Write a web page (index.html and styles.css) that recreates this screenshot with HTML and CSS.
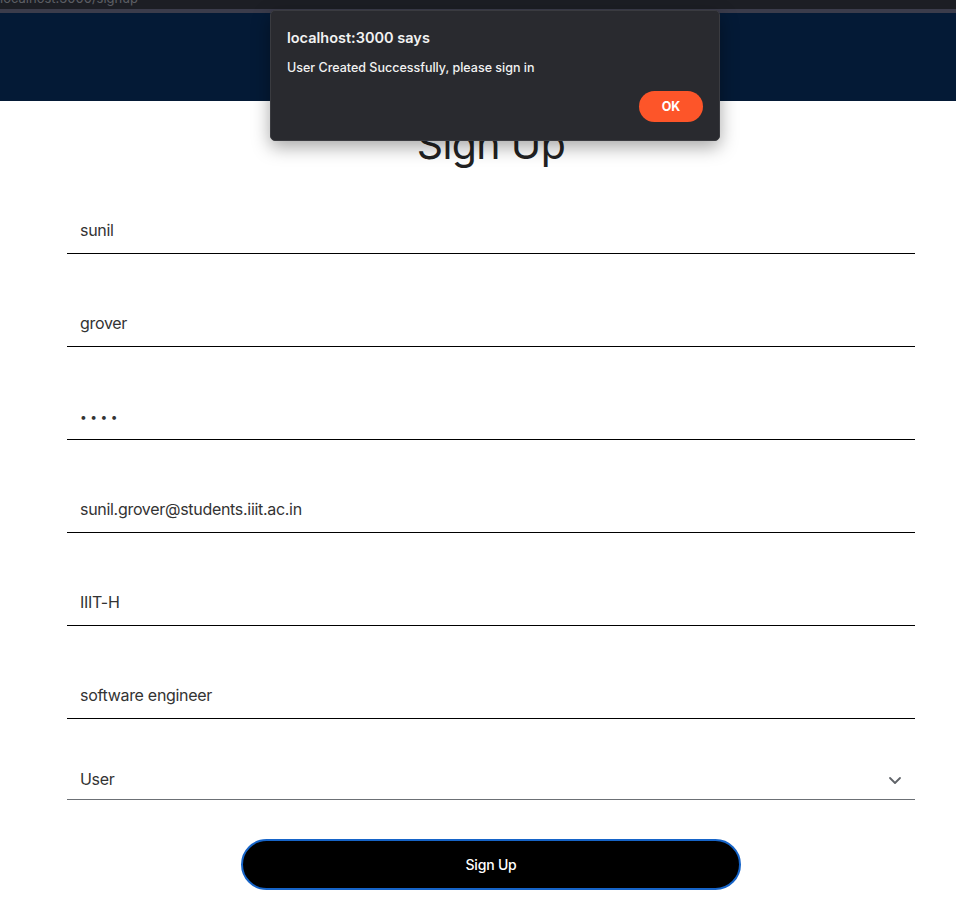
FILE: index.html
```html
<!DOCTYPE html>
<html lang="en">
<head>
<meta charset="utf-8">
<title>Sign Up</title>
<link rel="stylesheet" href="styles.css">
</head>
<body>
<div class="topstrip"><span class="url">localhost:3000/signup</span></div>
<div class="topline"></div>
<header class="navbar"></header>
<main class="page">
  <h1 class="title">Sign Up</h1>
  <form class="form">
    <div class="field"><input class="input" type="text" value="sunil"></div>
    <div class="field"><input class="input" type="text" value="grover"></div>
    <div class="field"><input class="input pw" type="password" value="1234"></div>
    <div class="field"><input class="input" type="text" value="sunil.grover@students.iiit.ac.in"></div>
    <div class="field"><input class="input" type="text" value="IIIT-H"></div>
    <div class="field"><input class="input" type="text" value="software engineer"></div>
    <div class="select-wrap">
      <span class="select-text">User</span>
      <svg class="chevron" width="14" height="10" viewBox="0 0 14 10"><path d="M2 3l5 5 5-5" fill="none" stroke="#5f6368" stroke-width="1.8" stroke-linecap="round" stroke-linejoin="round"/></svg>
    </div>
    <div class="btn-row"><button type="button" class="btn">Sign Up</button></div>
  </form>
</main>
<div class="dialog">
  <div class="dlg-title">localhost:3000 says</div>
  <div class="dlg-msg">User Created Successfully, please sign in</div>
  <div class="dlg-actions"><button type="button" class="ok">OK</button></div>
</div>
</body>
</html>
```
FILE: styles.css
```css
* { box-sizing: border-box; }
html, body { margin: 0; padding: 0; background: #fff; }
body { font-family: Inter, "Noto Sans", sans-serif; color: #222; }

.topstrip {
  height: 9px;
  background: #1c1e24;
  overflow: hidden;
  position: relative;
}
.url {
  display: block;
  margin-top: -10px;
  font-size: 13px;
  line-height: 16px;
  color: #5c5e64;
}
.topline { height: 4px; background: #3b3c4b; }
.navbar { height: 88px; background: #041a36; }

.page { padding: 0 41px 0 67px; }
.title {
  margin: 19px 0 0;
  text-align: center;
  font-size: 41px;
  line-height: 48px;
  font-weight: 400;
  color: #222;
  letter-spacing: -0.6px;
}
.form { display: flex; flex-direction: column; margin-top: 39px; }
.field { margin-bottom: 46px; }
.input {
  display: block;
  width: 100%;
  height: 47px;
  border: 0;
  border-bottom: 1px solid #000;
  padding: 0 13px;
  font-family: Inter, sans-serif;
  font-size: 16px;
  letter-spacing: -0.3px;
  color: #333;
  background: transparent;
  outline: none;
}
.input.pw { letter-spacing: 3.5px; font-size: 12px; }
.select-wrap {
  margin-top: -5px;
  height: 40px;
  border-bottom: 1px solid #6c7075;
  display: flex;
  align-items: center;
  justify-content: space-between;
  padding: 0 13px;
}
.select-text { font-size: 16px; color: #333; letter-spacing: -0.3px; padding-bottom: 1px; }
.chevron { display: block; }
.btn-row { display: flex; justify-content: center; margin-top: 39px; }
.btn {
  width: 500px;
  height: 51px;
  background: #000;
  color: #fff;
  border: 2px solid #1664c8;
  border-radius: 26px;
  font-family: Inter, sans-serif;
  font-size: 14px;
  font-weight: 500;
  letter-spacing: -0.2px;
}

.dialog {
  position: absolute;
  left: 270px;
  top: 10px;
  width: 450px;
  height: 131px;
  background: #292a2f;
  border: 1px solid #3a3b40;
  border-radius: 5px;
  box-shadow: 0 6px 18px rgba(0,0,0,0.35);
  padding: 17px 16px 0 16px;
  font-family: Inter, "Noto Sans", sans-serif;
  color: #f2f2f2;
}
.dlg-title { font-size: 14.5px; font-weight: 600; line-height: 20px; }
.dlg-msg { font-size: 12.5px; line-height: 18px; margin-top: 11px; font-weight: 500; }
.dlg-actions { display: flex; justify-content: flex-end; margin-top: 14px; }
.ok {
  width: 64px;
  height: 31px;
  border: 0;
  border-radius: 16px;
  background: #fd5529;
  color: #fff;
  font-family: Inter, sans-serif;
  font-weight: 700;
  font-size: 12.5px;
}
```
